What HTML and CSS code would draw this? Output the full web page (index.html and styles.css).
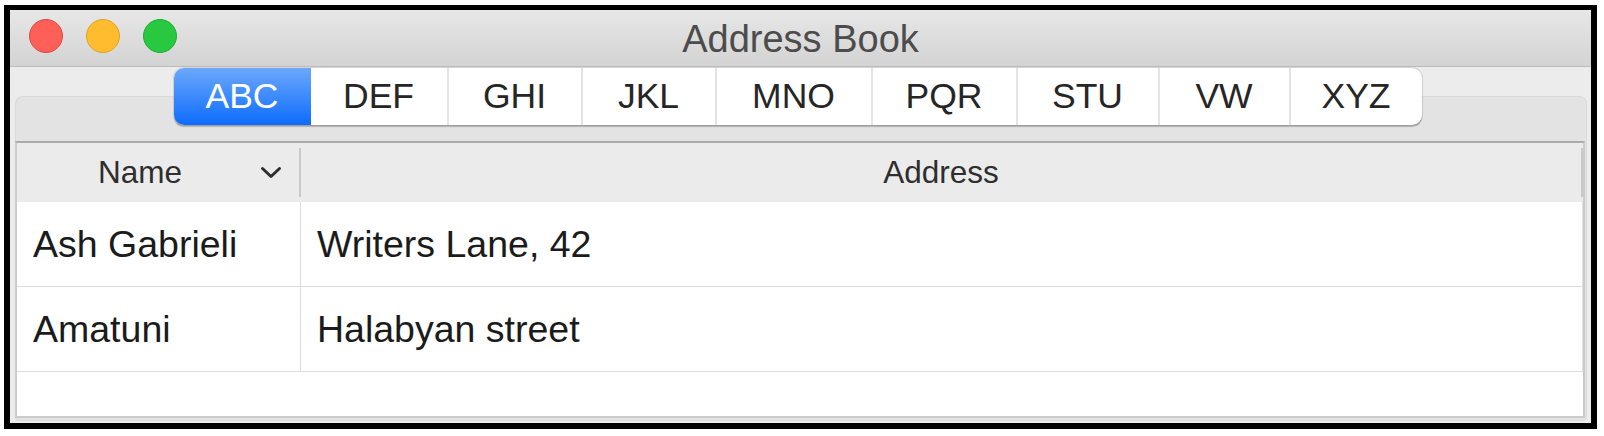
FILE: index.html
```html
<!DOCTYPE html>
<html lang="en">
<head>
<meta charset="utf-8">
<title>Address Book</title>
<link rel="stylesheet" href="styles.css">
</head>
<body>
<div class="window">
  <div class="titlebar">
    <div class="lights">
      <span class="light red"></span>
      <span class="light yellow"></span>
      <span class="light green"></span>
    </div>
    <div class="title">Address Book</div>
    <div class="spacer"></div>
  </div>
  <div class="content">
    <div class="seg-row">
      <div class="segmented">
        <div class="seg active">ABC</div>
        <div class="seg after-active">DEF</div>
        <div class="seg">GHI</div>
        <div class="seg">JKL</div>
        <div class="seg">MNO</div>
        <div class="seg">PQR</div>
        <div class="seg">STU</div>
        <div class="seg">VW</div>
        <div class="seg">XYZ</div>
      </div>
    </div>
    <div class="tabbox">
      <div class="table">
        <div class="thead">
          <div class="th th-name">
            <span class="th-label">Name</span>
            <svg class="chev" width="22" height="13" viewBox="0 0 22 13"><polyline points="2.5,2.5 11,10.5 19.5,2.5" fill="none" stroke="#2e2e2e" stroke-width="3" stroke-linecap="round" stroke-linejoin="round"/></svg>
          </div>
          <div class="th-divider"></div>
          <div class="th th-addr">Address</div>
          <div class="th-divider"></div>
        </div>
        <div class="row">
          <div class="td td-name">Ash Gabrieli</div>
          <div class="td td-addr">Writers Lane, 42</div>
        </div>
        <div class="row">
          <div class="td td-name">Amatuni</div>
          <div class="td td-addr">Halabyan street</div>
        </div>
        <div class="filler"></div>
      </div>
    </div>
  </div>
</div>
</body>
</html>
```

FILE: styles.css
```css
* { box-sizing: border-box; }

html, body {
  margin: 0;
  padding: 0;
  background: #ffffff;
}

body {
  font-family: "Liberation Sans", Arial, sans-serif;
}

.window {
  width: 1593px;
  height: 424px;
  margin: 5px 0 0 4px;
  border: 6px solid #000;
  border-top-width: 5px;
  display: flex;
  flex-direction: column;
  background: #ececec;
}

.titlebar {
  height: 57px;
  flex: 0 0 57px;
  display: grid;
  grid-template-columns: 1fr auto 1fr;
  align-items: center;
  background: linear-gradient(#e7e7e7, #d3d3d3);
  border-bottom: 1px solid #bcbcbc;
}

.lights {
  display: flex;
  gap: 23px;
  padding-left: 19px;
  align-self: start;
  padding-top: 9px;
}

.light {
  width: 34px;
  height: 34px;
  border-radius: 50%;
  display: block;
}
.red { background: #fe5f57; border: 1px solid #e2463f; }
.yellow { background: #febc2e; border: 1px solid #e0a325; }
.green { background: #28c840; border: 1px solid #1eae30; }

.title {
  font-size: 38px;
  color: #4c4c4c;
  line-height: 1;
  padding-top: 1px;
}

.content {
  flex: 1;
  display: flex;
  flex-direction: column;
  padding: 1px 4px 2px 5px;
}

.seg-row {
  display: flex;
  justify-content: center;
  padding-right: 7px;
  position: relative;
  z-index: 2;
}

.segmented {
  display: grid;
  grid-template-columns: 137px 136px 134px 134px 156px 145px 142px 131px 133px;
  height: 57px;
  background: #ffffff;
  border-radius: 10px;
  overflow: hidden;
  box-shadow: 0 0 0 1px rgba(0,0,0,0.10), 0 2px 1px -0.5px rgba(0,0,0,0.22);
}

.seg {
  display: flex;
  align-items: center;
  justify-content: center;
  font-size: 35.5px;
  color: #262626;
  border-left: 2px solid #e4e4e4;
}
.seg.active {
  border-left: none;
  color: #ffffff;
  background: linear-gradient(#6ca8fb, #0d6cfd);
}
.seg.after-active { border-left: none; }

.tabbox {
  flex: 1;
  margin-top: -29px;
  background: #e3e3e3;
  border-radius: 8px 8px 4px 4px;
  box-shadow: inset 0 0 0 1px #dadada;
  padding: 45px 2px 3px 0;
  display: flex;
  flex-direction: column;
  position: relative;
  z-index: 1;
}

.table {
  flex: 1;
  display: flex;
  flex-direction: column;
  background: #ffffff;
  border: 2px solid #cbcbcb;
  border-top-color: #ababab;
}

.thead {
  height: 59px;
  flex: 0 0 59px;
  display: flex;
  background: #ebebeb;
}

.th {
  display: flex;
  align-items: center;
  font-size: 31.5px;
  color: #2e2e2e;
}

.th-name {
  width: 282px;
  padding-right: 17px;
}
.th-label {
  flex: 1;
  text-align: center;
  padding-left: 3px;
}
.chev { display: block; }

.th-divider {
  width: 2px;
  margin: 5px 0;
  background: #c9c9c9;
}

.th-addr {
  flex: 1;
  justify-content: center;
}

.row {
  height: 85px;
  flex: 0 0 85px;
  display: flex;
  border-bottom: 1px solid #dcdcdc;
  border-right: 1px solid #e0e0e0;
}

.td {
  display: flex;
  align-items: center;
  font-size: 37.5px;
  color: #1b1b1b;
  padding-left: 16px;
}
.td-name {
  width: 284px;
  border-right: 1px solid #dcdcdc;
}
.td-addr { flex: 1; }

.filler { flex: 1; }
```
